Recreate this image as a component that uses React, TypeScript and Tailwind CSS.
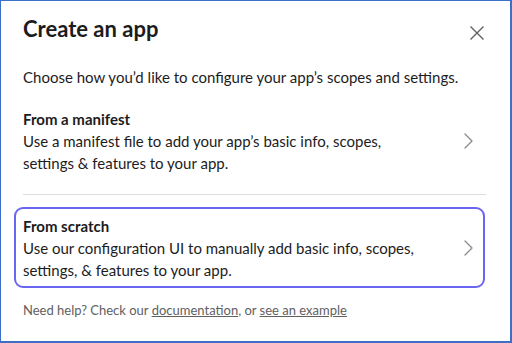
import React from "react";

function Chevron() {
  return (
    <svg width="9" height="16" viewBox="0 0 9 16" className="shrink-0" fill="none">
      <path d="M1 1 L8 8 L1 15" stroke="#8a8a8a" strokeWidth="1.3" strokeLinecap="round" strokeLinejoin="round" />
    </svg>
  );
}

function Item({ title, lines, selected }: { title: string; lines: string[]; selected?: boolean }) {
  return (
    <div
      className={
        "flex items-center rounded-[9px] border-2 pl-[7px] pr-[10px] pt-[6px] pb-[5px] " +
        (selected ? "border-[#6b66f2]" : "border-transparent")
      }
    >
      <div className="flex-1 text-[15px] leading-[22px] text-[#1d1c1d]">
        <div className="font-bold">{title}</div>
        {lines.map((l, i) => (
          <div key={i}>{l}</div>
        ))}
      </div>
      <Chevron />
    </div>
  );
}

export default function App() {
  return (
    <div
      className="w-[512px] h-[343px] bg-white border-t border-l border-r-2 border-b-2 border-[#3d6fc8] overflow-hidden"
      style={{ fontFamily: "Lato, 'Noto Sans', sans-serif" }}
    >
      <div className="flex items-start justify-between pl-[22px] pr-[26px] pt-[14px]">
        <h1 className="text-[22px] leading-[28px] font-bold text-[#1d1c1d]">Create an app</h1>
        <button className="mt-[11px] w-[14px] h-[14px]" aria-label="Close">
          <svg width="14" height="14" viewBox="0 0 14 14" fill="none">
            <path d="M0.5 0.5 L13.5 13.5 M13.5 0.5 L0.5 13.5" stroke="#616061" strokeWidth="1.4" />
          </svg>
        </button>
      </div>
      <p className="pl-[22px] mt-[23px] text-[15px] leading-[22px] text-[#1d1c1d]">
        Choose how you’d like to configure your app’s scopes and settings.
      </p>
      <div className="pl-[13px] pr-[25px] mt-[12px]">
        <Item
          title="From a manifest"
          lines={["Use a manifest file to add your app’s basic info, scopes,", "settings & features to your app."]}
        />
        <div className="ml-[9px] mr-[-1px] mt-[13px] mb-[12px] h-px bg-[#dddddd]" />
        <Item
          selected
          title="From scratch"
          lines={["Use our configuration UI to manually add basic info, scopes,", "settings, & features to your app."]}
        />
      </div>
      <p className="pl-[22px] mt-[13px] text-[13px] leading-[18px] text-[#616061]">
        Need help? Check our <span className="underline">documentation</span>, or{" "}
        <span className="underline">see an example</span>
      </p>
    </div>
  );
}
